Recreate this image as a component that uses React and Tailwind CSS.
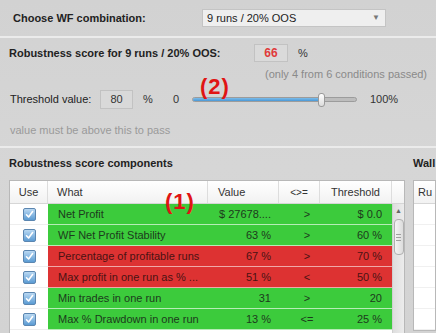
import React from 'react';

const rows = [
  { what: 'Net Profit', value: '$ 27678....', op: '>', thr: '$ 0.0', ok: true },
  { what: 'WF Net Profit Stability', value: '63 %', op: '>', thr: '60 %', ok: true },
  { what: 'Percentage of profitable runs', value: '67 %', op: '>', thr: '70 %', ok: false },
  { what: 'Max profit in one run as % ...', value: '51 %', op: '<', thr: '50 %', ok: false },
  { what: 'Min trades in one run', value: '31', op: '>', thr: '20', ok: true },
  { what: 'Max % Drawdown in one run', value: '13 %', op: '<=', thr: '25 %', ok: true },
];

const Checkbox = () => (
  <div className="w-[13px] h-[13px] rounded-[2px] border border-[#5b86b0] bg-gradient-to-b from-[#b9d8f2] to-[#5a9bd3] flex items-center justify-center">
    <svg width="9" height="9" viewBox="0 0 9 9" fill="none">
      <path d="M1.5 4.8 L3.6 7 L7.6 1.6" stroke="white" strokeWidth="1.6" strokeLinecap="round" strokeLinejoin="round" />
    </svg>
  </div>
);

const App = () => {
  return (
    <div className="relative w-[436px] h-[333px] overflow-hidden bg-gradient-to-b from-[#d2d2d2] via-[#d6d6d6] to-[#d3d3d3] text-[11px] text-[#333] font-['Liberation_Sans',Arial,sans-serif]">
      {/* WF combination */}
      <div className="flex items-center h-[36px]">
        <div className="w-[202px] pl-[13px] font-bold text-[#222]">Choose WF combination:</div>
        <div className="w-[184px] h-[18px] bg-[#efefef] border border-[#c4c4c4] flex items-center justify-between pl-[4px] pr-[5px] text-[#222]">
          <span>9 runs / 20% OOS</span>
          <span className="text-[8px] text-[#777]">▼</span>
        </div>
      </div>
      <div className="h-[2px] bg-[#ebebeb]" />

      {/* Robustness score */}
      <div className="flex items-center h-[18px] mt-[6px]">
        <div className="w-[254px] pl-[9px] font-bold text-[#222]">Robustness score for 9 runs / 20% OOS:</div>
        <div className="w-[34px] h-[18px] border border-[#c2c2c2] bg-[#dadada] flex items-center justify-center text-[12px] font-bold text-[#e03a3a]">66</div>
        <span className="ml-[10px]">%</span>
      </div>
      <div className="h-[16px] mt-[4px] ml-[265px] flex items-center text-[#8a8a8a] whitespace-nowrap">(only 4 from 6 conditions passed)</div>

      <div className="flex items-center h-[19px] mt-[8px]">
        <div className="w-[100px] pl-[10px] text-[#222]">Threshold value:</div>
        <div className="w-[33px] h-[19px] border border-[#c2c2c2] bg-[#d9d9d9] flex items-center justify-center">80</div>
        <span className="ml-[10px] w-[30px]">%</span>
        <span className="w-[19px]">0</span>
        <div className="relative w-[165px] h-[19px] flex items-center">
          <div className="w-full h-[5px] rounded-full bg-[#bdbdbd] border border-[#9c9c9c] overflow-hidden">
            <div className="w-[128px] h-full bg-gradient-to-b from-[#7bbcea] to-[#4a98d6]" />
          </div>
          <div className="absolute left-[126px] top-[3px] w-[7px] h-[14px] rounded-[3px] border border-[#9a9a9a] bg-gradient-to-b from-white to-[#dcdcdc]" />
        </div>
        <span className="ml-[13px]">100%</span>
      </div>
      <div className="h-[16px] mt-[13px] pl-[10px] flex items-center text-[#9a9a9a]">value must be above this to pass</div>
      <div className="h-[2px] mt-[8px] bg-[#ebebeb]" />

      {/* components */}
      <div className="flex items-center h-[30px] pl-[9px] font-bold text-[#222]">
        <div className="w-[404px]">Robustness score components</div>
        <div>Wall</div>
      </div>

      <div className="flex mt-[2px] pl-[9px]">
        <div className="w-[396px] h-[160px] border border-[#b8b8b8] bg-white">
          <div className="flex h-[23px] border-b border-[#d6d6d6] bg-gradient-to-b from-white to-[#f2f2f2] text-[#333]">
            <div className="w-[38px] border-r border-[#dddddd] flex items-center justify-center">Use</div>
            <div className="w-[160px] border-r border-[#dddddd] flex items-center pl-[9px]">What</div>
            <div className="w-[71px] border-r border-[#dddddd] flex items-center pl-[10px]">Value</div>
            <div className="w-[41px] border-r border-[#dddddd] flex items-center justify-center text-[10px]">&lt;&gt;=</div>
            <div className="w-[72px] border-r border-[#dddddd] flex items-center justify-center">Threshold</div>
            <div className="flex-1" />
          </div>
          <div className="flex">
            <div className="w-[382px]">
              {rows.map((r) => (
                <div key={r.what} className="flex h-[21px]">
                  <div className="w-[38px] flex items-center justify-center border-b border-[#eeeeee]">
                    <Checkbox />
                  </div>
                  <div
                    className={
                      'flex flex-1 h-[21px] border-b ' +
                      (r.ok
                        ? 'bg-[#3ccb3c] border-[#b6ecb6] text-[#1d3a1d]'
                        : 'bg-[#dd3232] border-[#f0a8a8] text-[#4a1212]')
                    }
                  >
                    <div className="w-[160px] pl-[10px] flex items-center whitespace-nowrap">{r.what}</div>
                    <div className="w-[71px] pr-[8px] flex items-center justify-end whitespace-nowrap">{r.value}</div>
                    <div className="w-[41px] pl-[15px] flex items-center justify-center">{r.op}</div>
                    <div className="w-[72px] pr-[10px] flex items-center justify-end">{r.thr}</div>
                  </div>
                </div>
              ))}
            </div>
            <div className="w-[12px] h-[135px] bg-gradient-to-r from-[#dedede] to-[#ececec] border-l border-[#d0d0d0] flex flex-col items-center">
              <span className="text-[7px] text-[#666] mt-[3px] leading-none">▲</span>
              <div className="mt-[5px] w-[10px] h-[36px] rounded-[4px] border border-[#b0b0b0] bg-gradient-to-r from-[#f4f4f4] to-[#dcdcdc] flex flex-col items-center justify-center gap-[2px]">
                <div className="w-[5px] h-px bg-[#a0a0a0]" />
                <div className="w-[5px] h-px bg-[#a0a0a0]" />
                <div className="w-[5px] h-px bg-[#a0a0a0]" />
              </div>
            </div>
          </div>
        </div>

        <div className="ml-[8px] w-[60px] h-[151px] border border-[#b8b8b8] bg-white">
          <div className="h-[23px] border-b border-[#d6d6d6] bg-gradient-to-b from-white to-[#f2f2f2] flex items-center pl-[4px]">Ru</div>
          {[0, 1, 2, 3, 4, 5].map((i) => (
            <div key={i} className="h-[21px] border-b border-[#f0f0f0]" />
          ))}
        </div>
      </div>

      {/* annotations */}
      <div className="absolute left-[200px] top-[76px] text-[22px] font-bold text-[#e01414] leading-none tracking-[1px]">(2)</div>
      <div className="absolute left-[165px] top-[191px] text-[22px] font-bold text-[#e01414] leading-none tracking-[1px]">(1)</div>
    </div>
  );
};

export default App;
